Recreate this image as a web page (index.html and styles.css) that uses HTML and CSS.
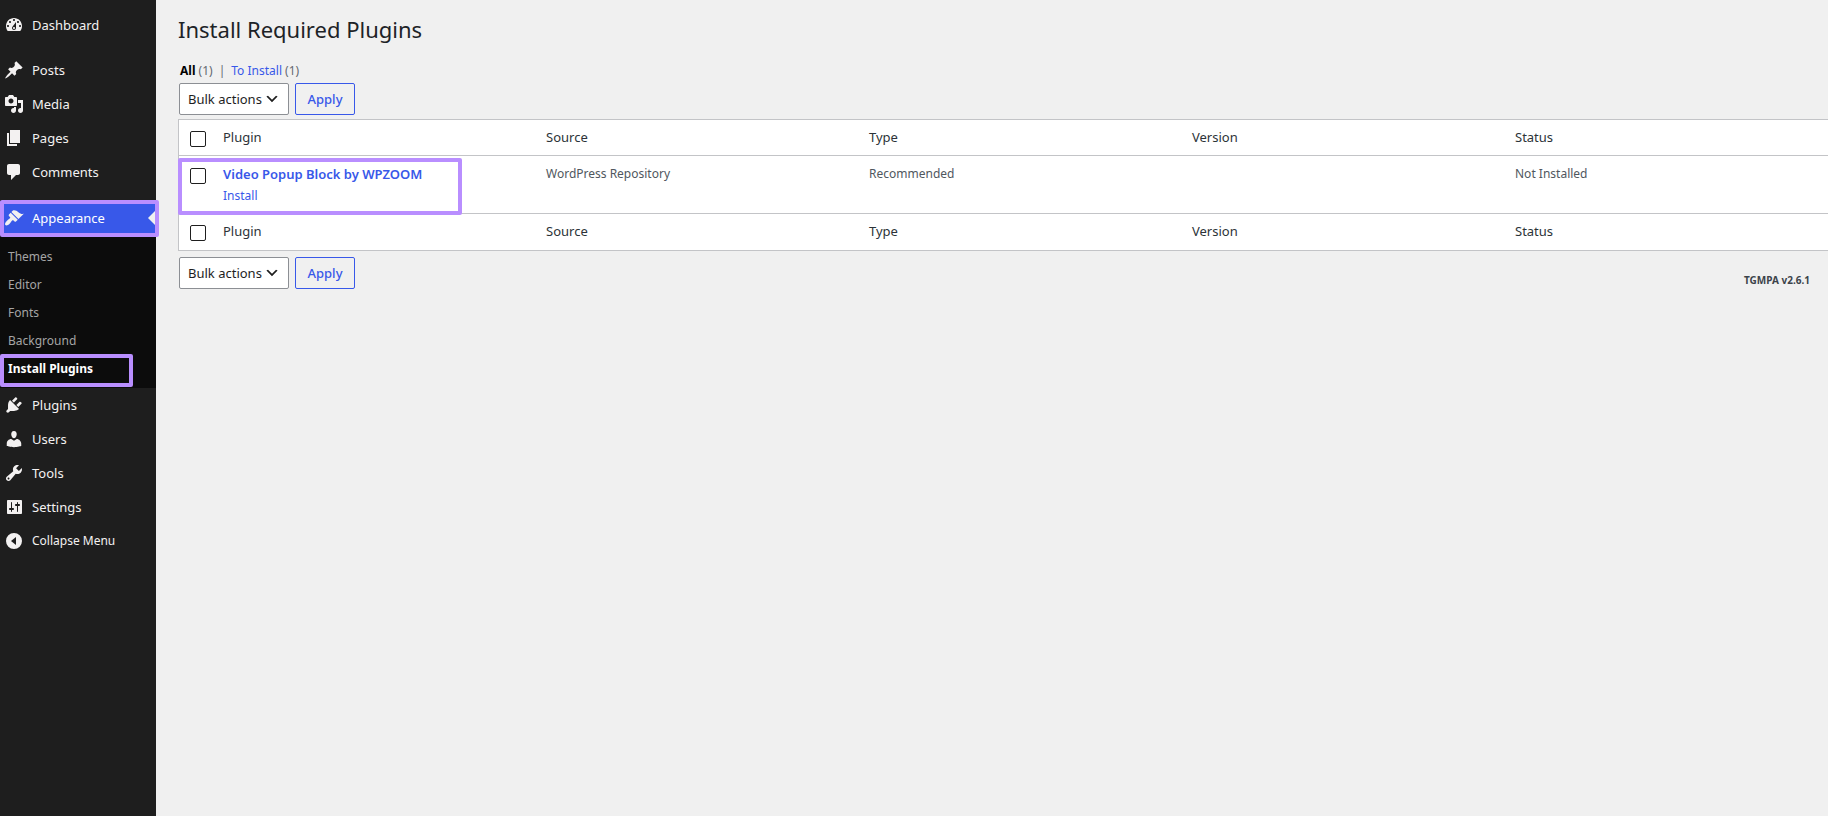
FILE: index.html
```
<!DOCTYPE html>
<html lang="en">
<head>
<meta charset="utf-8">
<title>Install Required Plugins</title>
<link rel="stylesheet" href="styles.css">
</head>
<body>
<div class="admin">
  <nav class="sidebar" aria-label="Main menu">
    <ul class="menu">
      <li><a class="item" href="#"><svg class="icon" viewBox="0 0 20 20"><path d="M3.76 16h12.48c1.1-1.37 1.76-3.11 1.76-5 0-4.42-3.58-8-8-8s-8 3.58-8 8c0 1.89.66 3.63 1.76 5zM10 4c.55 0 1 .45 1 1s-.45 1-1 1-1-.45-1-1 .45-1 1-1zM6 6c.55 0 1 .45 1 1s-.45 1-1 1-1-.45-1-1 .45-1 1-1zm8 0c.55 0 1 .45 1 1s-.45 1-1 1-1-.45-1-1 .45-1 1-1zm-5.37 5.55L12 7v6c0 1.1-.9 2-2 2s-2-.9-2-2c0-.57.24-1.08.63-1.45zM4 10c.55 0 1 .45 1 1s-.45 1-1 1-1-.45-1-1 .45-1 1-1zm12 0c.55 0 1 .45 1 1s-.45 1-1 1-1-.45-1-1 .45-1 1-1zm-5 3c0-.55-.45-1-1-1s-1 .45-1 1 .45 1 1 1 1-.45 1-1z"/></svg>Dashboard</a></li>
      <li class="group"><a class="item" href="#"><svg class="icon" viewBox="0 0 20 20"><path d="M10.44 3.02l1.82-1.82 6.36 6.35-1.83 1.82c-1.05-.68-2.48-.57-3.41.36l-.75.75c-.92.93-1.04 2.35-.35 3.41l-1.83 1.82-2.41-2.41-2.8 2.79c-.42.42-3.38 2.71-3.8 2.29s1.86-3.39 2.28-3.81l2.79-2.79L4.1 9.36l1.83-1.82c1.05.69 2.48.57 3.4-.36l.75-.75c.93-.92 1.05-2.35.36-3.41z"/></svg>Posts</a></li>
      <li><a class="item" href="#"><svg class="icon" viewBox="0 0 20 20"><path d="M13 11V4c0-.55-.45-1-1-1h-1.67L9 1H5L3.67 3H2c-.55 0-1 .45-1 1v7c0 .55.45 1 1 1h10c.55 0 1-.45 1-1zM7 4.5c1.38 0 2.5 1.12 2.5 2.5S8.38 9.5 7 9.5 4.5 8.38 4.5 7 5.62 4.5 7 4.5zM14 6h5v10.5c0 1.38-1.12 2.5-2.5 2.5S14 17.88 14 16.5s1.12-2.5 2.5-2.5c.17 0 .34.02.5.05V9h-3V6zm-4 8.05V13h2v3.5c0 1.38-1.12 2.5-2.5 2.5S7 17.88 7 16.5 8.12 14 9.5 14c.17 0 .34.02.5.05z"/></svg>Media</a></li>
      <li><a class="item" href="#"><svg class="icon" viewBox="0 0 20 20"><path d="M6 15V2h10v13H6zm-1 1h8v2H3V5h2v11z"/></svg>Pages</a></li>
      <li><a class="item" href="#"><svg class="icon" viewBox="0 0 20 20"><path d="M5 2h9c1.1 0 2 .9 2 2v7c0 1.1-.9 2-2 2h-2l-5 5v-5H5c-1.1 0-2-.9-2-2V4c0-1.1.9-2 2-2z"/></svg>Comments</a></li>
      <li class="group current">
        <div class="marked">
          <a class="item" href="#"><svg class="icon" viewBox="0 0 20 20"><path d="M14.48 11.06L7.41 3.99l1.5-1.5c.5-.56 2.3-.47 3.51.32 1.21.8 1.43 1.28 2.91 2.1 1.18.64 2.45 1.26 4.45.85zm-.71.71L6.7 4.7 4.93 6.47c-.39.39-.39 1.02 0 1.41l1.06 1.06c.39.39.39 1.03 0 1.42-.6.6-1.43 1.11-2.21 1.69-.35.26-.7.53-1.01.84C1.43 14.23.4 16.08 1.4 17.07c.99 1 2.84-.03 4.18-1.36.31-.31.58-.66.85-1.02.57-.78 1.08-1.61 1.69-2.21.39-.39 1.02-.39 1.41 0l1.06 1.06c.39.39 1.02.39 1.41 0z"/></svg>Appearance</a>
          <span class="pointer"></span>
          <span class="highlight highlight-menu"></span>
        </div>
        <ul class="submenu">
          <li><a href="#">Themes</a></li>
          <li><a href="#">Editor</a></li>
          <li><a href="#">Fonts</a></li>
          <li><a href="#">Background</a></li>
          <li class="marked"><a class="active" href="#" aria-current="page">Install Plugins</a><span class="highlight highlight-submenu"></span></li>
        </ul>
      </li>
      <li><a class="item" href="#"><svg class="icon" viewBox="0 0 20 20"><path d="M13.11 4.36L9.87 7.6 8 5.73l3.24-3.24c.35-.34 1.05-.2 1.56.32.52.51.66 1.21.31 1.55zm-8 1.77l.91-1.12 9.01 9.01-1.19.84c-.71.71-2.63 1.16-3.82 1.16H6.14L4.9 17.26c-.59.59-1.54.59-2.12 0-.59-.58-.59-1.53 0-2.12l1.24-1.24v-3.88c0-1.13.4-3.19 1.09-3.89zm7.26 3.97l3.24-3.24c.34-.35 1.04-.21 1.55.31.52.51.66 1.21.31 1.55l-3.24 3.25z"/></svg>Plugins</a></li>
      <li><a class="item" href="#"><svg class="icon" viewBox="0 0 20 20"><path d="M10 9.25c-2.27 0-2.73-3.44-2.73-3.44C7 4.02 7.82 2 9.97 2c2.16 0 2.98 2.02 2.71 3.81 0 0-.41 3.44-2.68 3.44zm0 2.57L12.72 10c2.39 0 4.52 2.33 4.52 4.53v2.49s-3.65 1.13-7.24 1.13c-3.65 0-7.24-1.13-7.24-1.13v-2.49c0-2.25 1.94-4.48 4.47-4.48z"/></svg>Users</a></li>
      <li><a class="item" href="#"><svg class="icon" viewBox="0 0 20 20"><path d="M16.68 9.77c-1.34 1.34-3.3 1.67-4.95.99l-5.41 6.52c-.99.99-2.59.99-3.58 0s-.99-2.59 0-3.57l6.52-5.42c-.68-1.65-.35-3.61.99-4.95 1.28-1.28 3.12-1.62 4.72-1.06l-2.89 2.89 2.82 2.82 2.86-2.87c.53 1.58.18 3.39-1.08 4.65zM3.81 16.21c.4.39 1.04.39 1.43 0 .4-.4.4-1.04 0-1.43-.39-.4-1.03-.4-1.43 0-.39.39-.39 1.03 0 1.43z"/></svg>Tools</a></li>
      <li><a class="item" href="#"><svg class="icon" viewBox="0 0 20 20"><path d="M18 16V4c0-.55-.45-1-1-1H4c-.55 0-1 .45-1 1v12c0 .55.45 1 1 1h13c.55 0 1-.45 1-1zM8 11h1c.55 0 1 .45 1 1s-.45 1-1 1H8v1.5c0 .28-.22.5-.5.5s-.5-.22-.5-.5V13H6c-.55 0-1-.45-1-1s.45-1 1-1h1V5.5c0-.28.22-.5.5-.5s.5.22.5.5V11zm5-2h-1c-.55 0-1-.45-1-1s.45-1 1-1h1V5.5c0-.28.22-.5.5-.5s.5.22.5.5V7h1c.55 0 1 .45 1 1s-.45 1-1 1h-1v5.5c0 .28-.22.5-.5.5s-.5-.22-.5-.5V9z"/></svg>Settings</a></li>
      <li><button class="item collapse" type="button"><svg class="icon" viewBox="0 0 20 20"><path fill-rule="evenodd" d="M10 2a8 8 0 1 0 0 16 8 8 0 0 0 0-16zM12 6v8l-5-4z"/></svg>Collapse Menu</button></li>
    </ul>
  </nav>

  <main class="content">
    <h1>Install Required Plugins</h1>
    <ul class="filters">
      <li><a class="chosen" href="#">All</a> (1)</li>
      <li class="bar">|</li>
      <li><a href="#">To Install</a> (1)</li>
    </ul>
    <div class="actions">
      <select aria-label="Select bulk action"><option>Bulk actions</option><option>Install</option></select>
      <button class="apply" type="button">Apply</button>
    </div>
    <div class="listing">
      <table>
        <thead>
          <tr>
            <th class="check"><input type="checkbox" aria-label="Select all"></th>
            <th>Plugin</th><th>Source</th><th>Type</th><th>Version</th><th>Status</th>
          </tr>
        </thead>
        <tbody>
          <tr>
            <td class="check"><input type="checkbox" aria-label="Select Video Popup Block by WPZOOM"></td>
            <td><a class="name" href="#">Video Popup Block by WPZOOM</a><a class="row-action" href="#">Install</a></td>
            <td>WordPress Repository</td><td>Recommended</td><td></td><td>Not Installed</td>
          </tr>
        </tbody>
        <tfoot>
          <tr>
            <th class="check"><input type="checkbox" aria-label="Select all, bottom"></th>
            <th>Plugin</th><th>Source</th><th>Type</th><th>Version</th><th>Status</th>
          </tr>
        </tfoot>
      </table>
      <span class="highlight highlight-row"></span>
    </div>
    <div class="actions">
      <select aria-label="Select bulk action, bottom"><option>Bulk actions</option><option>Install</option></select>
      <button class="apply" type="button">Apply</button>
      <strong class="version">TGMPA v2.6.1</strong>
    </div>
  </main>
</div>
</body>
</html>
```
FILE: styles.css
```
* { box-sizing: border-box; }

body {
  margin: 0;
  background: #f0f0f0;
  color: #50575e;
  font-family: "Noto Sans", "Open Sans", sans-serif;
  font-size: 12px;
  line-height: 20px;
}

a { color: #3858e9; text-decoration: none; }
ul { margin: 0; padding: 0; list-style: none; }

.admin { display: flex; min-height: 100vh; }

/* Sidebar */
.sidebar { flex: 0 0 156px; background: #1e1e1e; }
.menu { padding-top: 8px; }
.group { margin-top: 11px; }
.group.current { margin-top: 12px; }

.item {
  display: flex;
  align-items: center;
  gap: 8px;
  width: 100%;
  height: 34px;
  padding: 0 4px;
  border: 0;
  background: none;
  color: #f3f1f1;
  font: inherit;
  font-size: 13px;
  text-align: left;
}
.item.collapse { font-size: 12px; }
.icon { flex: none; width: 20px; height: 20px; fill: #f3f1f1; }

.marked { position: relative; }
.current .item { background: #3858e9; color: #fff; }
.pointer {
  position: absolute;
  top: 9px;
  right: 0;
  border: 8px solid transparent;
  border-right-color: #f0f0f0;
  border-left: 0;
}

.submenu { padding: 8px 0 5px; background: #0c0c0c; }
.submenu a { display: block; padding: 4px 8px; color: #a5a5a5; }
.submenu .active { color: #fff; font-weight: 700; }

.highlight {
  position: absolute;
  border: 4px solid #b98eff;
  border-radius: 2px;
  pointer-events: none;
}
.highlight-menu { inset: -1px -3px -2px 0; }
.highlight-submenu { inset: -1px 23px -4px 0; }
.highlight-row { top: 39px; left: 0; width: 284px; height: 57px; }

/* Content */
.content { flex: 1; min-width: 0; padding: 13px 0 0 22px; overflow: hidden; }
h1 { margin: 0; color: #1d2327; font-size: 22px; font-weight: 400; line-height: 32px; }

.filters { display: flex; gap: 6px; padding: 16px 0 2px 2px; color: #646970; }
.filters .chosen { color: #000; font-weight: 700; }

.actions { display: flex; gap: 6px; padding-left: 1px; }

select {
  appearance: none;
  width: 110px;
  height: 32px;
  padding: 0 22px 0 8px;
  border: 1px solid #8c8f94;
  border-radius: 2px;
  background: #fff url("data:image/svg+xml,%3Csvg xmlns='http://www.w3.org/2000/svg' viewBox='0 0 20 20'%3E%3Cpath d='M5 6l5 5 5-5 2 1-7 7-7-7 2-1z' fill='%231e1e1e'/%3E%3C/svg%3E") no-repeat right 8px center / 16px 16px;
  color: #1e1e1e;
  font: inherit;
  font-size: 13px;
}

.apply {
  height: 32px;
  width: 60px;
  padding: 0;
  border: 1px solid #3858e9;
  border-radius: 2px;
  background: transparent;
  color: #3858e9;
  font: inherit;
  font-size: 13px;
  font-weight: 500;
}

.listing { position: relative; margin: 4px -2px 6px 0; }
table {
  width: 100%;
  border: 1px solid #c3c4c7;
  border-spacing: 0;
  background: #fff;
  table-layout: fixed;
}
th, td { padding: 8px 9px; text-align: left; vertical-align: top; }
th { height: 36px; color: #2c3338; font-size: 13px; font-weight: 400; line-height: 18px; }
thead th { border-bottom: 1px solid #c3c4c7; }
tfoot th { height: 37px; border-top: 1px solid #c3c4c7; }
td { height: 57px; padding-top: 9px; line-height: 18px; }
.check { width: 35px; padding: 11px 0 0 11px; line-height: 0; }
td.check { padding-top: 12px; }

input[type="checkbox"] {
  appearance: none;
  width: 16px;
  height: 16px;
  margin: 0;
  border: 1px solid #1e1e1e;
  border-radius: 2px;
  background: #fff;
}
.name { display: block; font-size: 13px; font-weight: 600; }
.row-action { display: block; margin-top: 4px; }

.version { margin: 13px 18px 0 auto; color: #3c434a; font-size: 10px; }
```
